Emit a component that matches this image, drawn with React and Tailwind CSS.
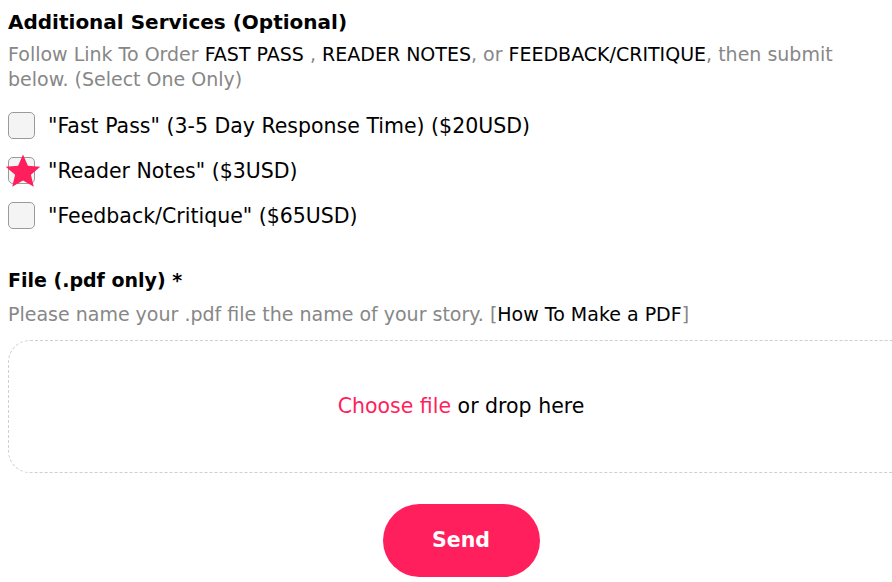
import React, { useState } from 'react';

const services = [
  { id: 'fast', label: '"Fast Pass" (3-5 Day Response Time) ($20USD)' },
  { id: 'reader', label: '"Reader Notes" ($3USD)' },
  { id: 'feedback', label: '"Feedback/Critique" ($65USD)' },
];

const Star = () => (
  <svg viewBox="0 0 24 24" className="absolute -left-[5px] -top-[6px] w-[38px] h-[38px] pointer-events-none">
    <path d="M12 1.5l3.1 7.2 7.8.6-5.9 5.1 1.8 7.6L12 18l-6.8 4 1.8-7.6-5.9-5.1 7.8-.6z" fill="#ff1f5c" />
  </svg>
);

const App = () => {
  const [selected, setSelected] = useState('reader');

  return (
    <div className="bg-white min-h-screen overflow-hidden" style={{ fontFamily: '"DejaVu Sans", "Open Sans", sans-serif' }}>
      <div className="w-[914px] pl-[8px] pt-[7px]">
        <h2 className="text-[20px] font-bold text-black leading-[30px]">Additional Services (Optional)</h2>
        <p className="text-[19px] text-[#878787] leading-[25px] mt-[5px] w-[870px]">
          Follow Link To Order <span className="text-black">FAST PASS</span> , <span className="text-black">READER NOTES</span>, or <span className="text-black">FEEDBACK/CRITIQUE</span>, then submit below. (Select One Only)
        </p>

        <div className="flex flex-col gap-[18px] mt-[20px]">
          {services.map((s) => (
            <label key={s.id} className="flex items-center gap-[13px] cursor-pointer" onClick={() => setSelected(s.id)}>
              <span className="relative w-[27px] h-[27px] rounded-[5px] border border-[#9a9a9a] bg-[#f4f4f4] shrink-0">
                {selected === s.id && <Star />}
              </span>
              <span className="text-[20.5px] text-black leading-[26px]">{s.label}</span>
            </label>
          ))}
        </div>

        <h2 className="text-[19px] font-bold text-black leading-[30px] mt-[36px]">File (.pdf only) *</h2>
        <p className="text-[19px] text-[#878787] leading-[25px] mt-[7px]">
          Please name your .pdf file the name of your story. [<span className="text-black">How To Make a PDF</span>]
        </p>

        <div className="mt-[13px] h-[133px] rounded-[22px] border border-dashed border-[#cfcfcf] flex items-center justify-center text-[20.5px]">
          <span className="text-[#ff1f5c]">Choose file</span>
          <span className="text-black">&nbsp;or drop here</span>
        </div>

        <div className="flex justify-center mt-[31px]">
          <button className="w-[157px] h-[73px] rounded-full bg-[#ff1f5c] text-white text-[20.5px] font-bold">Send</button>
        </div>
      </div>
    </div>
  );
};

export default App;
